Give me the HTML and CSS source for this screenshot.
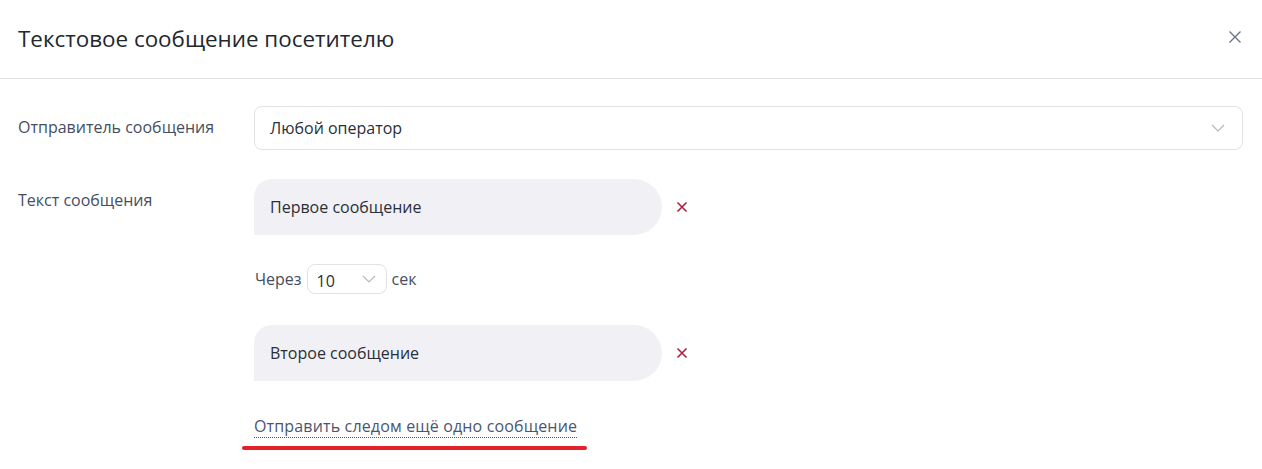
FILE: index.html
```html
<!DOCTYPE html>
<html lang="ru">
<head>
    <meta charset="UTF-8">
    <title>Текстовое сообщение посетителю</title>
    <link rel="stylesheet" href="styles.css">
</head>
<body>
    <div class="modal">
        <div class="modal-header">
            <h1>Текстовое сообщение посетителю</h1>
            <button type="button" class="close-btn" aria-label="Закрыть">
                <svg width="14" height="14" viewBox="0 0 14 14"><path d="M1.5 1.5 L12.5 12.5 M12.5 1.5 L1.5 12.5" stroke="#6a7488" stroke-width="1.4" fill="none"/></svg>
            </button>
        </div>

        <div class="modal-body">
            <div class="form-row">
                <label class="form-label">Отправитель сообщения</label>
                <div class="select select-wide">
                    <span>Любой оператор</span>
                    <svg class="chevron" width="14" height="8" viewBox="0 0 14 8"><path d="M1 1 L7 7 L13 1" stroke="#b3b7bf" stroke-width="1.2" fill="none"/></svg>
                </div>
            </div>

            <div class="form-row">
                <label class="form-label">Текст сообщения</label>
                <div class="messages">
                    <div class="message-item">
                        <div class="bubble">Первое сообщение</div>
                        <button type="button" class="remove-btn" aria-label="Удалить">
                            <svg width="12" height="12" viewBox="0 0 12 12"><path d="M1.5 1.5 L10.5 10.5 M10.5 1.5 L1.5 10.5" stroke="#b01f40" stroke-width="1.6" fill="none"/></svg>
                        </button>
                    </div>

                    <div class="delay-row">
                        <span>Через</span>
                        <div class="select select-small">
                            <span>10</span>
                            <svg class="chevron" width="14" height="8" viewBox="0 0 14 8"><path d="M1 1 L7 7 L13 1" stroke="#b3b7bf" stroke-width="1.2" fill="none"/></svg>
                        </div>
                        <span>сек</span>
                    </div>

                    <div class="message-item">
                        <div class="bubble">Второе сообщение</div>
                        <button type="button" class="remove-btn" aria-label="Удалить">
                            <svg width="12" height="12" viewBox="0 0 12 12"><path d="M1.5 1.5 L10.5 10.5 M10.5 1.5 L1.5 10.5" stroke="#b01f40" stroke-width="1.6" fill="none"/></svg>
                        </button>
                    </div>

                    <a href="#" class="add-link">Отправить следом ещё одно сообщение</a>
                    <div class="marker"></div> <!-- red highlight stroke -->
                </div>
            </div>
        </div>
    </div>
</body>
</html>
```

FILE: styles.css
```css
html, body {
    margin: 0;
    background: #FFF;
    font-family: "Open Sans", "Noto Sans", sans-serif;
    color: #2a2f38;
}

.modal {
    width: 1262px;
}

.modal-header {
    height: 78px;
    display: flex;
    align-items: center;
    justify-content: space-between;
    padding: 0 20px 0 18px;
    border-bottom: 1px solid #e3e3e6;
}

h1 {
    margin: 0;
    font-size: 22.4px;
    font-weight: 400;
    color: #23272e;
    padding-bottom: 2px;
}

.close-btn {
    border: none;
    background: none;
    padding: 0;
    display: flex;
    margin-top: -4px;
    cursor: pointer;
}

.modal-body {
    padding: 27px 19px 0 18px;
}

.form-row {
    display: grid;
    grid-template-columns: 236px 1fr;
    margin-bottom: 29px;
}

.form-label {
    font-size: 16px;
    line-height: 24px;
    padding-top: 9px;
    color: #464e60;
}

.select {
    display: flex;
    align-items: center;
    justify-content: space-between;
    box-sizing: border-box;
    border: 1px solid #e2e2e6;
    border-radius: 8px;
    font-size: 16px;
    color: #2a2f38;
    background: #FFF;
}

.select-wide {
    height: 44px;
    padding: 0 17px 0 15px;
}

.select-small {
    width: 80px;
    height: 30px;
    padding: 3px 10px 0 9px;
    margin: 0 5px;
}

.select-small .chevron {
    margin-top: -3px;
}

.messages {
    display: flex;
    flex-direction: column;
    align-items: flex-start;
}

.message-item {
    display: flex;
    align-items: center;
}

.bubble {
    width: 408px;
    height: 56px;
    box-sizing: border-box;
    padding: 0 16px;
    display: flex;
    align-items: center;
    background: #f1f1f5;
    border-radius: 18px 28px 28px 0;
    font-size: 16px;
    color: #2a2f38;
}

.remove-btn {
    border: none;
    background: none;
    padding: 0;
    margin-left: 14px;
    display: flex;
    cursor: pointer;
}

.delay-row {
    display: flex;
    align-items: center;
    margin: 29px 0 31px 1px;
    font-size: 16px;
    color: #464e60;
}

.add-link {
    margin-top: 34px;
    font-size: 16px;
    line-height: 22px;
    letter-spacing: 0.15px;
    color: #4a5670;
    text-decoration: none;
    border-bottom: 1px dotted #4a5670;
}

.marker {
    width: 345px;
    height: 4px;
    margin: 8px 0 0 -12px;
    background: #e3202b;
    border-radius: 2px;
}
```
